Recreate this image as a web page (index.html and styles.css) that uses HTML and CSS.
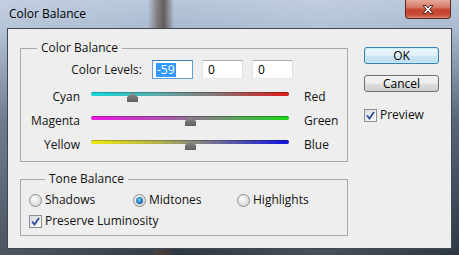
FILE: index.html
```html
<!DOCTYPE html>
<html lang="en">
<head>
    <meta charset="UTF-8">
    <title>Color Balance</title>
    <link rel="stylesheet" href="styles.css">
</head>
<body>
    <div class="window">
        <div class="titlebar">
            <span class="title">Color Balance</span>
            <button class="close-btn" aria-label="Close">
                <svg width="14" height="11" viewBox="0 0 14 11">
                    <path d="M2 1.5 L5 1.5 L7 4 L9 1.5 L12 1.5 L8.6 5.5 L12 9.5 L9 9.5 L7 7 L5 9.5 L2 9.5 L5.4 5.5 Z" fill="#fff" stroke="#4a2a24" stroke-width="1" stroke-linejoin="round"/>
                </svg>
            </button>
        </div>
        <div class="client">
            <div class="groups">
                <fieldset class="group">
                    <legend>Color Balance</legend>
                    <div class="levels-row">
                        <span class="levels-label">Color Levels:</span>
                        <span class="field focused"><span class="selected-text">-59</span></span>
                        <span class="field">0</span>
                        <span class="field">0</span>
                    </div>
                    <div class="slider-row">
                        <span class="side-left">Cyan</span>
                        <div class="slider">
                            <div class="track cyan-red"></div>
                            <span class="thumb" style="left: 36px"></span>
                        </div>
                        <span class="side-right">Red</span>
                    </div>
                    <div class="slider-row">
                        <span class="side-left">Magenta</span>
                        <div class="slider">
                            <div class="track magenta-green"></div>
                            <span class="thumb" style="left: 94px"></span>
                        </div>
                        <span class="side-right">Green</span>
                    </div>
                    <div class="slider-row">
                        <span class="side-left">Yellow</span>
                        <div class="slider">
                            <div class="track yellow-blue"></div>
                            <span class="thumb" style="left: 94px"></span>
                        </div>
                        <span class="side-right">Blue</span>
                    </div>
                </fieldset>
                <fieldset class="group tone">
                    <legend>Tone Balance</legend>
                    <div class="radio-row">
                        <label class="radio"><span class="dot"></span>Shadows</label>
                        <label class="radio"><span class="dot on"></span>Midtones</label>
                        <label class="radio"><span class="dot"></span>Highlights</label>
                    </div>
                    <label class="check luminosity">
                        <span class="box">
                            <svg width="9" height="9" viewBox="0 0 9 9"><path d="M1 4.5 L3.5 7.5 L8 1" fill="none" stroke="#2b4c9a" stroke-width="1.8"/></svg>
                        </span>Preserve Luminosity
                    </label>
                </fieldset>
            </div>
            <div class="actions">
                <button class="btn default">OK</button>
                <button class="btn">Cancel</button>
                <label class="check preview">
                    <span class="box">
                        <svg width="9" height="9" viewBox="0 0 9 9"><path d="M1 4.5 L3.5 7.5 L8 1" fill="none" stroke="#2b4c9a" stroke-width="1.8"/></svg>
                    </span>Preview
                </label>
            </div>
        </div>
    </div>
</body>
</html>
```

FILE: styles.css
```css
body {
    margin: 0;
    padding: 0;
    font-family: "Open Sans", "Noto Sans", sans-serif;
    font-size: 12px;
    color: #111;
}

.window {
    width: 459px;
    height: 255px;
    display: flex;
    flex-direction: column;
    background:
        linear-gradient(90deg, transparent 148px, rgba(90, 70, 58, 0.55) 157px, rgba(75, 58, 48, 0.75) 164px, transparent 174px),
        linear-gradient(90deg, rgba(255, 255, 255, 0.15) 0, rgba(255, 255, 255, 0) 40%, rgba(255, 255, 255, 0.12) 70%, rgba(255, 255, 255, 0) 100%),
        linear-gradient(180deg, #b8c7da 0, #a9bad1 28px, #58667a 120px, #2e3744 255px);
}

.titlebar {
    height: 28px;
    display: flex;
    align-items: flex-start;
}

.title {
    margin: 6px 0 0 9px;
    line-height: 16px;
    color: #000;
}

.close-btn {
    margin-left: auto;
    margin-right: 8px;
    width: 46px;
    height: 19px;
    padding: 0;
    border: 1px solid #5a2a22;
    border-top: none;
    border-radius: 0 0 4px 4px;
    background: linear-gradient(180deg, #e6a898 0, #d77a68 40%, #c4402e 55%, #c8503a 85%, #e08a70 100%);
    display: flex;
    align-items: center;
    justify-content: center;
}

.client {
    flex: 1;
    margin: 0 7px 6px;
    border: 1px solid #3d4857;
    background: #eeeeee;
    display: flex;
    padding: 11px 0 0 12px;
}

.groups {
    width: 328px;
}

.group {
    margin: 0;
    padding: 0;
    border: 1px solid #a9a9a9;
    min-inline-size: 0;
}

.group legend {
    margin-left: 16px;
    padding: 0 4px;
    line-height: 16px;
}

.levels-row {
    display: flex;
    align-items: center;
    margin-top: 4px;
    margin-bottom: 10px;
    gap: 9px;
}

.levels-label {
    width: 121px;
    text-align: right;
    margin-right: 1px;
}

.field {
    box-sizing: border-box;
    width: 41px;
    height: 19px;
    border: 1px solid #abadb3;
    border-left-color: #e2e3ea;
    border-right-color: #dbdfe6;
    border-bottom-color: #e3e9ef;
    background: #fff;
    padding-left: 5px;
    line-height: 17px;
    color: #000;
}

.field.focused {
    border-color: #5d9fd6;
    border-top-color: #3d7bad;
    padding-left: 3px;
}

.selected-text {
    display: inline-block;
    background: #3399ff;
    color: #fff;
    padding: 0 1px;
    line-height: 14px;
}

.slider-row {
    display: flex;
    align-items: flex-start;
    height: 24px;
    line-height: 16px;
}

.side-left {
    width: 59px;
    text-align: right;
}

.slider {
    position: relative;
    width: 198px;
    height: 12px;
    margin: 3px 0 0 11px;
}

.track {
    height: 4px;
    border-radius: 2px;
    box-shadow: inset 0 1px 0 rgba(0, 0, 0, 0.25);
}

.cyan-red {
    background: linear-gradient(90deg, #12dada 0, #5fa8a8 35%, #8a7070 65%, #e01818 100%);
}

.magenta-green {
    background: linear-gradient(90deg, #f014e6 0, #b050b0 35%, #709070 65%, #18d818 100%);
}

.yellow-blue {
    background: linear-gradient(90deg, #eeea10 0, #b0b050 35%, #6a6a9a 65%, #1010e0 100%);
}

.thumb {
    position: absolute;
    top: 1px;
    width: 11px;
    height: 9px;
    background: linear-gradient(180deg, #8c8c8c, #5e5e5e);
    clip-path: polygon(50% 0, 100% 45%, 100% 100%, 0 100%, 0 45%);
}

.side-right {
    margin-left: 15px;
}

.tone {
    margin-top: 9px;
    padding: 5px 0 6px 8px;
}

.radio-row {
    display: flex;
    line-height: 16px;
}

.radio {
    width: 104px;
    display: flex;
    align-items: center;
}

.dot {
    box-sizing: border-box;
    width: 13px;
    height: 13px;
    border-radius: 50%;
    border: 1px solid #8e8f8f;
    background: radial-gradient(circle at 40% 35%, #ffffff 0, #e6e6e6 45%, #c9c9c9 100%);
    margin-right: 3px;
    display: flex;
    align-items: center;
    justify-content: center;
}

.dot.on::after {
    content: "";
    width: 7px;
    height: 7px;
    border-radius: 50%;
    background: radial-gradient(circle at 45% 40%, #7ad0ff 0, #2a86c8 45%, #0b3f73 100%);
}

.check {
    display: flex;
    align-items: center;
    line-height: 16px;
}

.luminosity {
    margin-top: 5px;
}

.box {
    box-sizing: border-box;
    width: 13px;
    height: 13px;
    border: 1px solid #8e8f8f;
    background: linear-gradient(135deg, #d6dce6, #fbfbfb);
    margin-right: 3px;
    display: flex;
    align-items: center;
    justify-content: center;
}

.actions {
    margin-left: 16px;
    margin-top: 7px;
    display: flex;
    flex-direction: column;
    align-items: flex-start;
}

.btn {
    width: 75px;
    height: 17px;
    padding: 0;
    font-family: inherit;
    font-size: 12px;
    line-height: 15px;
    color: #000;
    border: 1px solid #707070;
    border-radius: 3px;
    background: linear-gradient(180deg, #f2f2f2 0, #ebebeb 50%, #dddddd 51%, #cfcfcf 100%);
    margin-bottom: 11px;
}

.btn.default {
    border-color: #3c7fb1;
    box-shadow: inset 0 0 0 1px #c8ecfa;
    background: linear-gradient(180deg, #eef7fc 0, #e0eff8 50%, #cde6f4 51%, #bcdcef 100%);
}

.preview {
    margin-top: 4px;
}
```
